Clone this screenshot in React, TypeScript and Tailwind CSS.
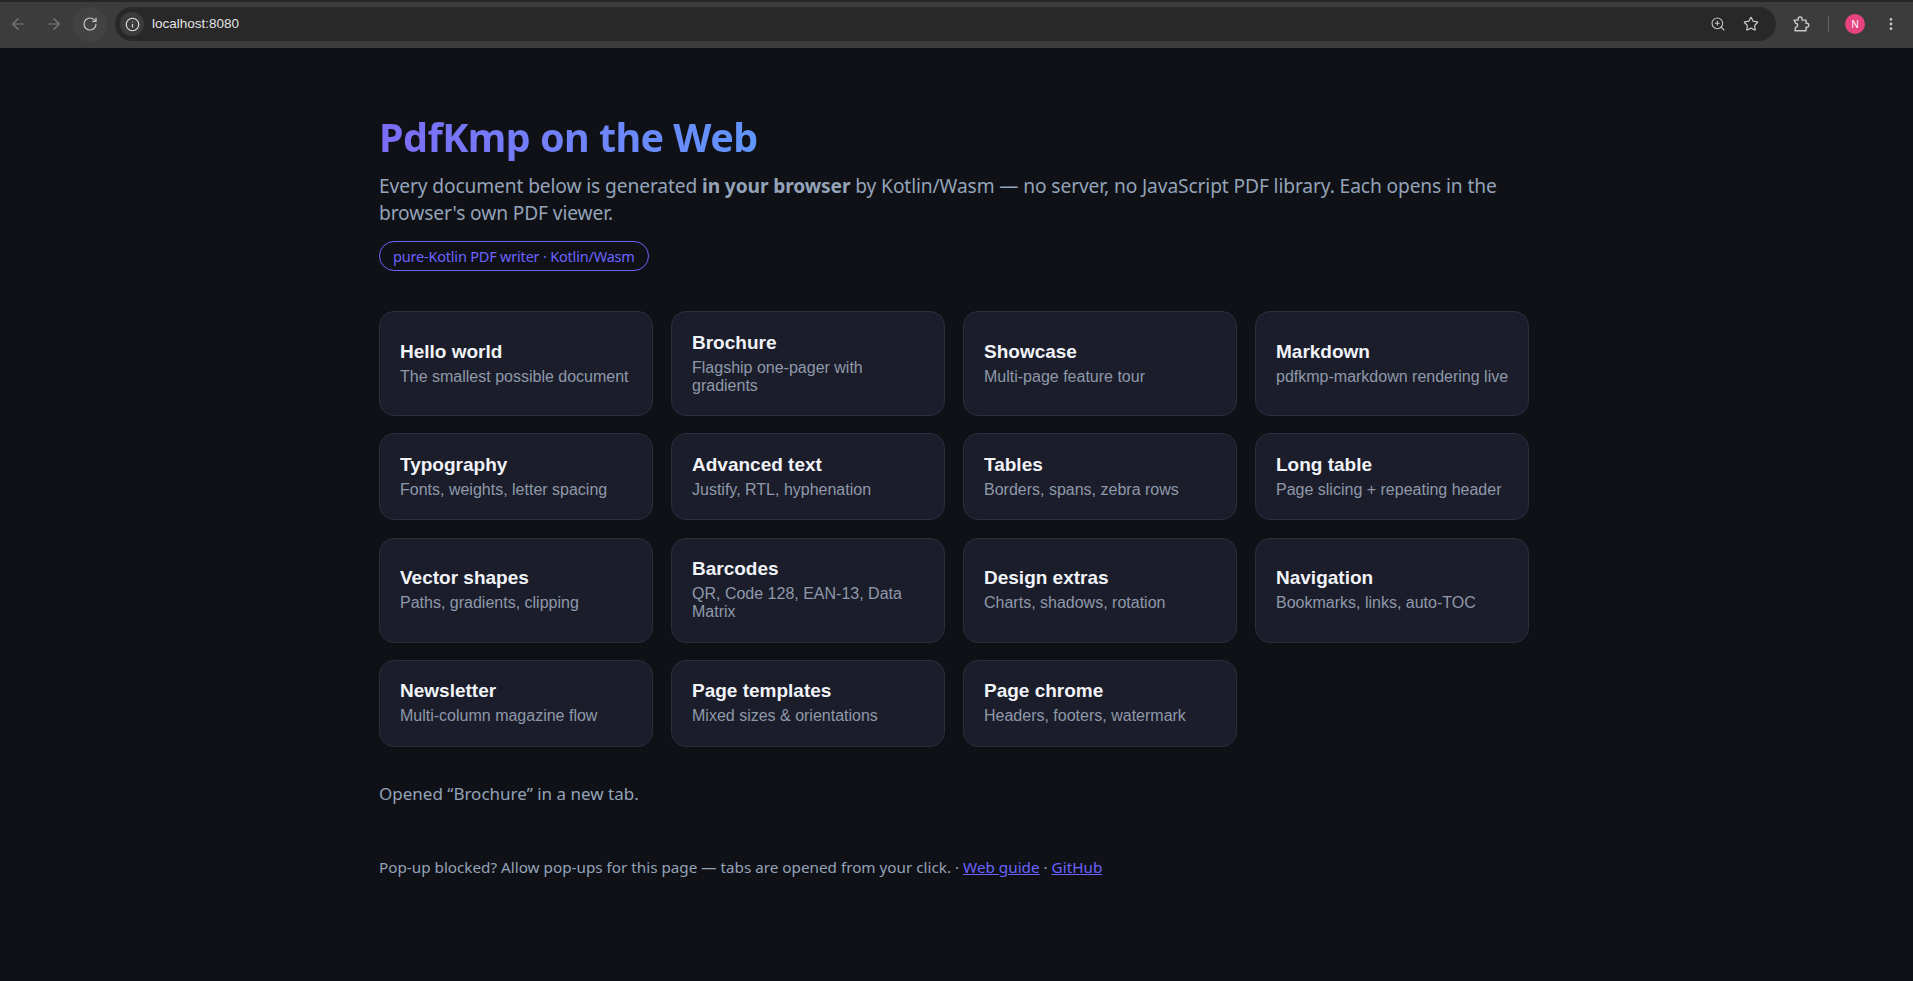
import React from "react";
import { ArrowLeft, ArrowRight, RotateCw, Info, ZoomIn, Star, EllipsisVertical } from "lucide-react";

const cards = [
  { title: "Hello world", desc: "The smallest possible document" },
  { title: "Brochure", desc: "Flagship one-pager with gradients" },
  { title: "Showcase", desc: "Multi-page feature tour" },
  { title: "Markdown", desc: "pdfkmp-markdown rendering live" },
  { title: "Typography", desc: "Fonts, weights, letter spacing" },
  { title: "Advanced text", desc: "Justify, RTL, hyphenation" },
  { title: "Tables", desc: "Borders, spans, zebra rows" },
  { title: "Long table", desc: "Page slicing + repeating header" },
  { title: "Vector shapes", desc: "Paths, gradients, clipping" },
  { title: "Barcodes", desc: "QR, Code 128, EAN-13, Data Matrix" },
  { title: "Design extras", desc: "Charts, shadows, rotation" },
  { title: "Navigation", desc: "Bookmarks, links, auto-TOC" },
  { title: "Newsletter", desc: "Multi-column magazine flow" },
  { title: "Page templates", desc: "Mixed sizes & orientations" },
  { title: "Page chrome", desc: "Headers, footers, watermark" },
];

const ExtensionIcon: React.FC = () => (
  <svg viewBox="0 0 24 24" fill="none" stroke="#c7c7c7" strokeWidth="1.8" strokeLinejoin="round" className="w-[19px] h-[19px] ml-[15px]">
    <path d="M4 6.5h5V5a2.5 2.5 0 0 1 5 0v1.5h5v4h1a2.5 2.5 0 0 1 0 5h-1V20H5l.8-4.5a2.5 2.5 0 0 0 0-5L4 6.5z" />
  </svg>
);

const Toolbar: React.FC = () => (
  <div className="h-[48px] shrink-0 bg-[#3c3c3c] border-t-[2px] border-[#262626] pb-[2px] flex items-center pr-[14px] font-['Liberation_Sans',sans-serif]">
    <div className="w-[35px] h-[35px] flex items-center justify-center"><ArrowLeft strokeWidth={1.6} className="w-[18px] h-[18px] text-[#7d7d7d]" /></div>
    <div className="w-[35px] h-[35px] ml-[1px] flex items-center justify-center"><ArrowRight strokeWidth={1.6} className="w-[18px] h-[18px] text-[#7d7d7d]" /></div>
    <div className="w-[35px] h-[35px] ml-[1px] rounded-full bg-[#424242] flex items-center justify-center"><RotateCw strokeWidth={1.8} className="w-[16px] h-[16px] text-[#c7c7c7]" /></div>
    <div className="ml-[8px] flex-1 h-[34px] rounded-full bg-[#282828] flex items-center pl-[5px] pr-[17px]">
      <div className="w-[24px] h-[24px] rounded-full bg-[#3c3c3c] flex items-center justify-center"><Info strokeWidth={1.8} className="w-[15px] h-[15px] text-[#e3e3e3]" /></div>
      <span className="ml-[8px] text-[13.5px] text-[#e3e3e3]">localhost:8080</span>
      <div className="flex-1" />
      <ZoomIn strokeWidth={1.6} className="w-[16px] h-[16px] text-[#c7c7c7]" />
      <Star strokeWidth={1.8} className="w-[16px] h-[16px] ml-[17px] text-[#c7c7c7]" />
    </div>
    <ExtensionIcon />
    <div className="w-px h-[16px] ml-[18px] bg-[#666666]" />
    <div className="ml-[16px] w-[20px] h-[20px] rounded-full bg-[#e8437f] text-white text-[10px] flex items-center justify-center">N</div>
    <EllipsisVertical strokeWidth={2.2} className="w-[16px] h-[16px] ml-[18px] text-[#c7c7c7]" />
  </div>
);

export default function App() {
  return (
    <div className="h-[981px] flex flex-col overflow-hidden bg-[#0f1117]">
      <Toolbar />
      <main className="w-[1150px] ml-[379px] pt-[64.5px] font-['Noto_Sans',sans-serif]">
        <h1 className="text-[39.5px] leading-[48px] tracking-[-0.55px] font-bold w-fit bg-gradient-to-r from-[#7c6cf5] to-[#5f95fb] bg-clip-text text-transparent">PdfKmp on the Web</h1>
        <p className="mt-[11.5px] text-[19.2px] leading-[27px] tracking-[-0.12px] text-[#94a3b8]">
          Every document below is generated <strong className="font-bold">in your browser</strong> by Kotlin/Wasm — no server, no JavaScript PDF library. Each opens in the browser's own PDF viewer.
        </p>
        <span className="mt-[15px] block w-fit h-[30px] leading-[28px] px-[13px] rounded-full border border-[#6c63ff] text-[#6c63ff] text-[14.5px] tracking-[-0.2px]">pure-Kotlin PDF writer · Kotlin/Wasm</span>
        <div className="mt-[40px] grid grid-cols-4 gap-x-[18px] gap-y-[17.25px]">
          {cards.map((c) => (
            <button key={c.title} className="pl-[20px] pr-[17px] pt-[18.5px] pb-[20.5px] text-left rounded-[15px] bg-[#1b1e2a] border border-[#2b2e3d] flex flex-col justify-center font-['Liberation_Sans',sans-serif]">
              <span className="text-[19px] leading-[24px] font-bold text-[#f1f3f9]">{c.title}</span>
              <span className="mt-[4px] text-[16px] leading-[18px] text-[#8f98aa]">{c.desc}</span>
            </button>
          ))}
        </div>
        <p className="mt-[35.5px] text-[17px] leading-[24px] text-[#94a3b8]">Opened “Brochure” in a new tab.</p>
        <p className="mt-[49px] text-[15.25px] leading-[24px] text-[#94a3b8]">
          Pop-up blocked? Allow pop-ups for this page — tabs are opened from your click. · <a className="underline text-[#6c63ff]" href="#">Web guide</a> · <a className="underline text-[#6c63ff]" href="#">GitHub</a>
        </p>
      </main>
    </div>
  );
}
